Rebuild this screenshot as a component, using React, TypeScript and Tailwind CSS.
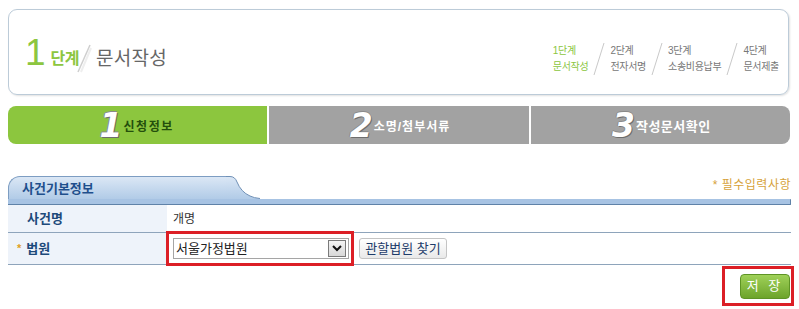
import type { ReactElement } from "react";

const KR = "font-['Liberation_Sans','Noto_Sans_CJK_KR',sans-serif]";

type Step = { no: string; name: string; active?: boolean };

const steps: Step[] = [
  { no: "1단계", name: "문서작성", active: true },
  { no: "2단계", name: "전자서명" },
  { no: "3단계", name: "소송비용납부" },
  { no: "4단계", name: "문서제출" },
];

function Slash(): ReactElement {
  return (
    <svg width="14" height="34" viewBox="0 0 14 34" className="mx-[4px]">
      <line x1="12" y1="1" x2="2" y2="33" stroke="#c9c9c9" strokeWidth="1" />
    </svg>
  );
}

function BigNo({ n }: { n: string }): ReactElement {
  return (
    <span className="font-['DejaVu_Sans',sans-serif] text-[33px] font-bold italic leading-none text-white [text-shadow:1px_1px_0_#6d6d6d,-1px_0_0_#8a8a8a,0_-1px_0_#8a8a8a]">
      {n}
    </span>
  );
}

export default function App(): ReactElement {
  return (
    <div className={`h-[309px] w-[799px] overflow-hidden bg-white ${KR}`}>
      {/* step header */}
      <div className="pl-2 pr-[10px] pt-[9px]">
        <div className="flex h-[86px] items-end justify-between rounded-[9px] border border-[#bccbd8] pb-[24px] pl-[16px] pr-[9px] shadow-[1px_1px_2px_rgba(0,0,0,0.12)]">
          <div className="flex items-end">
            <span className="font-['Liberation_Sans',sans-serif] text-[37px] leading-[34px] text-[#8cc63f]">1</span>
            <span className="ml-[5px] text-[16px] font-bold leading-[22px] tracking-[-0.5px] text-[#8cc63f]">단계</span>
            <svg width="16" height="30" viewBox="0 0 16 30" className="-ml-[3px] mb-[-4px]">
              <line x1="14" y1="1" x2="2" y2="28" stroke="#cfcfcf" strokeWidth="1.5" />
              <line x1="15" y1="4" x2="5" y2="28" stroke="#eeeeee" strokeWidth="2" />
            </svg>
            <span className="ml-[4px] text-[19px] leading-[22px] tracking-[0.3px] text-[#666666]">문서작성</span>
          </div>
          <div className="mb-[-6px] flex items-center">
            {steps.map((s, i) => (
              <div key={s.no} className="flex items-center">
                {i > 0 ? <Slash /> : null}
                <div
                  className={`text-[10px] leading-[16px] tracking-[-0.3px] ${s.active ? "text-[#8cc63f]" : "text-[#777777]"}`}
                >
                  <div>{s.no}</div>
                  <div>{s.name}</div>
                </div>
              </div>
            ))}
          </div>
        </div>
      </div>

      {/* progress tabs */}
      <div className="mt-[11px] flex h-[38px] gap-[2px] pl-2 pr-[9px]">
        <div className="flex flex-1 items-center justify-center gap-[1px] rounded-l-[8px] bg-[#8cc63e] pr-[2px]">
          <BigNo n="1" />
          <span className="mt-[3px] text-[12px] font-bold tracking-[1.5px] text-[#244f0c]">신청정보</span>
        </div>
        <div className="flex flex-1 items-center justify-center gap-[1px] bg-[#a2a2a2] pl-[2px]">
          <BigNo n="2" />
          <span className="mt-[3px] text-[12px] font-bold tracking-[1px] text-white">소명/첨부서류</span>
        </div>
        <div className="flex flex-1 items-center justify-center gap-[1px] rounded-r-[8px] bg-[#a2a2a2] pl-[2px]">
          <BigNo n="3" />
          <span className="mt-[3px] text-[13px] font-bold tracking-[0.5px] text-white">작성문서확인</span>
        </div>
      </div>

      {/* section tab */}
      <div className="mt-[32px] pl-2 pr-[8px]">
        <div className="flex h-[23px] items-end justify-between">
          <div className="flex h-full items-end">
            <div className="flex h-[23px] w-[218px] items-center rounded-tl-[12px] border-l border-t border-[#7d9dc2] bg-gradient-to-b from-[#dbe7f5] to-[#b1cbe7] pl-[13px] pt-[2px]">
              <span className="text-[13px] font-bold text-[#1f4f8c]">사건기본정보</span>
            </div>
            <svg width="34" height="23" viewBox="0 0 34 23" className="block">
              <defs>
                <linearGradient id="tabg" x1="0" y1="0" x2="0" y2="1">
                  <stop offset="0" stopColor="#dbe7f5" />
                  <stop offset="1" stopColor="#b1cbe7" />
                </linearGradient>
              </defs>
              <path d="M0,0.5 L4,0.5 Q9,0.5 11,6 Q15,16 24,20 Q28,22 34,22.5 L34,23 L0,23 Z" fill="url(#tabg)" />
              <path d="M0,0.5 L4,0.5 Q9,0.5 11,6 Q15,16 24,20 Q28,22 34,22.5" fill="none" stroke="#6f90b6" strokeWidth="1" />
            </svg>
          </div>
          <span className="mb-[5px] text-[12px] tracking-[0.5px] text-[#d6a23a]">* 필수입력사항</span>
        </div>
        <div className="h-[6px] rounded-r-[1px] border-b border-r border-[#5f82a8] bg-[#a7c3e3]" />
      </div>

      {/* table */}
      <div className="pl-2 pr-[8px]">
        <div className="flex h-[28px] items-center border-b border-[#8ea4bb]">
          <div className="flex h-full w-[159px] items-center bg-[#eef3fa] pl-[19px] text-[13px] font-bold text-[#1d4a7a]">
            사건명
          </div>
          <div className="pl-[6px] text-[12px] text-[#333333]">개명</div>
        </div>
        <div className="flex h-[32px] items-center border-b border-[#8ea4bb]">
          <div className="flex h-full w-[159px] items-center bg-[#eef3fa] pl-[9px] text-[13px] font-bold text-[#1d4a7a]">
            <span className="mr-[5px] text-[11px] text-[#e0a020]">*</span>
            법원
          </div>
          <div className="-ml-[1px] flex h-[35px] w-[188px] items-center border-[3px] border-[#dc1f26] pl-[4px]">
            <div className="flex h-[21px] w-[176px] items-center justify-between border border-[#a5a5a5] bg-white pl-[2px] pr-[2px]">
              <span className="text-[13px] text-[#222222]">서울가정법원</span>
              <div className="flex h-[17px] w-[18px] items-center justify-center border border-[#7a7a7a] bg-gradient-to-b from-[#f4f4f4] to-[#d8d8d8]">
                <svg width="10" height="7" viewBox="0 0 10 7">
                  <path d="M1,1 L5,5 L9,1" fill="none" stroke="#111111" strokeWidth="2" />
                </svg>
              </div>
            </div>
          </div>
          <button
            type="button"
            className="ml-[5px] flex h-[21px] w-[88px] items-center justify-center rounded-[3px] border border-[#c4c4c4] bg-gradient-to-b from-white to-[#e9e9e9] text-[13px] text-[#1d3c6a]"
          >
            관할법원 찾기
          </button>
        </div>
      </div>

      {/* save */}
      <div className="mt-[1px] flex justify-end pr-[5px]">
        <div className="flex h-[40px] w-[72px] items-center justify-end border-[3px] border-[#dc1f26] pr-[1px]">
          <button
            type="button"
            className="flex h-[25px] w-[50px] items-center justify-center rounded-[4px] border border-[#5e9425] bg-gradient-to-b from-[#9fd158] to-[#6da42a] text-[13px] tracking-[3px] text-white"
          >
            저 장
          </button>
        </div>
      </div>
    </div>
  );
}
